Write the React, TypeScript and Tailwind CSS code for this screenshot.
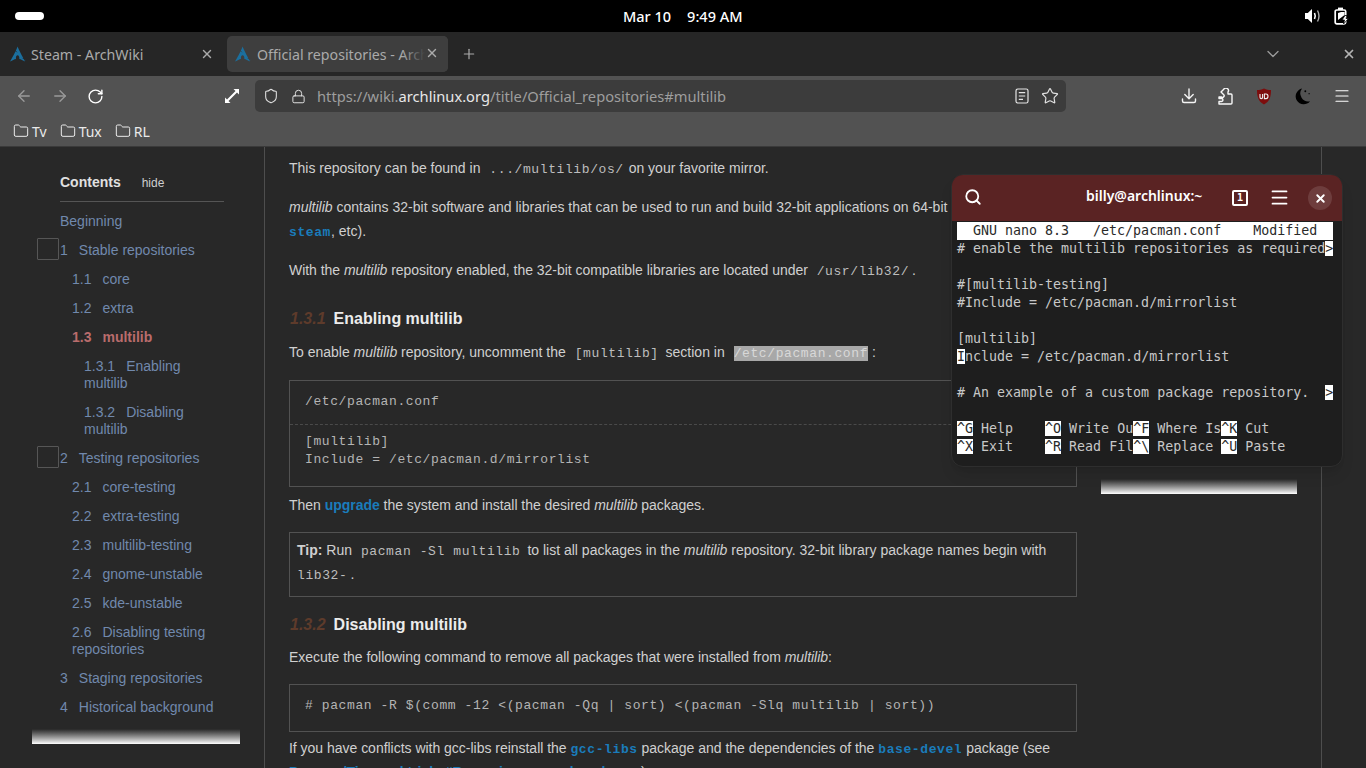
import React from "react";
import { ArrowLeft, ArrowRight, RotateCw, Lock, Star, Plus, ChevronDown, X, Menu, Folder, Search, Shield } from "lucide-react";
import { SiArchlinux } from "react-icons/si";

const sans = "font-['Liberation_Sans',sans-serif]";
const ui = "font-['Noto_Sans',sans-serif]";
const mono = "font-['Liberation_Mono',monospace] text-[13px] tracking-[0.6px]";

function Code({ children, cls = "" }: { children: React.ReactNode; cls?: string }) {
  return <code className={`${mono} leading-none text-[#bdbdbd] ml-[5px] mr-[3px] ${cls}`}>{children}</code>;
}
function LinkCode({ children }: { children: React.ReactNode }) {
  return <code className={`${mono} leading-none font-bold text-[#1a7cbb]`}>{children}</code>;
}

type Toc = { n: string; t: string; lvl: number; active?: boolean; box?: boolean };
const toc: Toc[] = [
  { n: "", t: "Beginning", lvl: 0 },
  { n: "1", t: "Stable repositories", lvl: 0, box: true },
  { n: "1.1", t: "core", lvl: 1 },
  { n: "1.2", t: "extra", lvl: 1 },
  { n: "1.3", t: "multilib", lvl: 1, active: true },
  { n: "1.3.1", t: "Enabling multilib", lvl: 2 },
  { n: "1.3.2", t: "Disabling multilib", lvl: 2 },
  { n: "2", t: "Testing repositories", lvl: 0, box: true },
  { n: "2.1", t: "core-testing", lvl: 1 },
  { n: "2.2", t: "extra-testing", lvl: 1 },
  { n: "2.3", t: "multilib-testing", lvl: 1 },
  { n: "2.4", t: "gnome-unstable", lvl: 1 },
  { n: "2.5", t: "kde-unstable", lvl: 1 },
  { n: "2.6", t: "Disabling testing repositories", lvl: 1 },
  { n: "3", t: "Staging repositories", lvl: 0 },
  { n: "4", t: "Historical background", lvl: 0 },
];

function TocRow({ item }: { item: Toc }) {
  const pad = item.lvl === 0 ? "pl-0" : item.lvl === 1 ? "pl-[12px]" : "pl-[24px]";
  const color = item.active ? "text-[#b96c6c] font-bold" : "text-[#7189ad]";
  return (
    <div className={`relative py-[6px] leading-[17px] text-[14px] w-[164px] ${pad} ${color}`}>
      {item.box && <span className="absolute left-[-23px] top-[2px] w-[22px] h-[22px] border border-[#565656] rounded-[1px]" />}
      {item.n && <span className="mr-[11px]">{item.n}</span>}
      {item.t}
    </div>
  );
}

function Inv({ children }: { children: React.ReactNode }) {
  return <span className="bg-white text-[#2a2a2a]">{children}</span>;
}

function Term() {
  return (
    <div className="absolute left-[951px] top-[174px] w-[392px] h-[293px] rounded-[12px] overflow-hidden bg-[#1e1e1e] border border-[#2e2e2e] shadow-lg">
      <div className={`h-[46px] bg-[#5a2323] flex items-center relative text-white ${ui}`}>
        <Search className="absolute left-[12px] top-[13px] w-[18px] h-[18px]" strokeWidth={2.4} />
        <div className="absolute left-[134px] top-[11px] text-[14px] font-semibold leading-[20px]">billy@archlinux:~</div>
        <div className="absolute left-[280px] top-[15px] w-[16px] h-[16px] border-[2px] border-white rounded-[2px] flex items-center justify-center text-[10px] font-bold leading-none font-['DejaVu_Sans_Mono',monospace]">1</div>
        <Menu className="absolute left-[317px] top-[12px] w-[21px] h-[21px]" strokeWidth={2} />
        <div className="absolute left-[356px] top-[11px] w-[24px] h-[24px] rounded-full bg-[#6e3d3d] flex items-center justify-center">
          <X className="w-[13px] h-[13px]" strokeWidth={3.5} />
        </div>
      </div>
      <pre className="pl-[5px] pt-[1px] font-['DejaVu_Sans_Mono',monospace] text-[13.3px] leading-[18px] text-[#c8c8c8]">
        <div className="h-[18px] w-[376px] bg-white text-[#2a2a2a]">{"  GNU nano 8.3   /etc/pacman.conf    Modified"}</div>
        <div className="h-[18px]">{"# enable the multilib repositories as required"}<Inv>{">"}</Inv></div>
        <div className="h-[18px]" />
        <div className="h-[18px]">{"#[multilib-testing]"}</div>
        <div className="h-[18px]">{"#Include = /etc/pacman.d/mirrorlist"}</div>
        <div className="h-[18px]" />
        <div className="h-[18px]">{"[multilib]"}</div>
        <div className="h-[18px]"><Inv>I</Inv>{"nclude = /etc/pacman.d/mirrorlist"}</div>
        <div className="h-[18px]" />
        <div className="h-[18px]">{"# An example of a custom package repository.  "}<Inv>{">"}</Inv></div>
        <div className="h-[18px]" />
        <div className="h-[18px]"><Inv>^G</Inv>{" Help    "}<Inv>^O</Inv>{" Write Ou"}<Inv>^F</Inv>{" Where Is"}<Inv>^K</Inv>{" Cut"}</div>
        <div className="h-[18px]"><Inv>^X</Inv>{" Exit    "}<Inv>^R</Inv>{" Read Fil"}<Inv>^\</Inv>{" Replace "}<Inv>^U</Inv>{" Paste"}</div>
      </pre>
    </div>
  );
}

function UBlock() {
  return (
    <svg width="16" height="17" viewBox="0 0 16 17">
      <path d="M8 0.5 C10.5 1.6 12.5 2 15 2 C15 9 13.5 13.5 8 16.5 C2.5 13.5 1 9 1 2 C3.5 2 5.5 1.6 8 0.5 Z" fill="#7d0d0d" />
      <path d="M4 6 V9.3 Q4 10.6 5.3 10.6 Q6.6 10.6 6.6 9.3 V6" stroke="#eee" strokeWidth="1.1" fill="none" />
      <path d="M8.4 6 H10 Q12 6 12 8.3 Q12 10.6 10 10.6 H8.4 Z" stroke="#eee" strokeWidth="1.1" fill="none" />
    </svg>
  );
}

function Moon() {
  return (
    <svg width="17" height="17" viewBox="0 0 18 18">
      <path d="M8.5 0.5 A8.5 8.5 0 1 0 17 14 A8.5 8.5 0 0 1 8.5 0.5 Z" fill="#000" />
      <circle cx="12" cy="3.5" r="1" fill="#000" />
      <circle cx="16" cy="6" r="0.7" fill="#000" />
    </svg>
  );
}

function Battery() {
  return (
    <svg width="16" height="18" viewBox="0 0 16 18" fill="none">
      <rect x="1.2" y="3" width="10.5" height="13.8" rx="1.6" stroke="#fff" strokeWidth="1.7" />
      <rect x="4" y="0.6" width="5" height="2.4" fill="#fff" />
      <path d="M7 5 H10.6 V8 L4 13 V6 Z" fill="#fff" />
      <path d="M11 8.5 L8 13 H10.5 L9.5 17 L14.5 11.5 H12 L13 8.5 Z" fill="#fff" stroke="#000" strokeWidth="0.8" />
    </svg>
  );
}

function Speaker() {
  return (
    <svg width="17" height="16" viewBox="0 0 17 16" fill="none">
      <path d="M8 1 V15 L3.8 11 H1 V5 H3.8 Z" fill="#fff" />
      <path d="M10.5 5 Q12 8 10.5 11" stroke="#fff" strokeWidth="1.6" />
      <path d="M13.5 2.5 Q16.5 8 13.5 13.5" stroke="#aaa" strokeWidth="1.4" />
    </svg>
  );
}

function Reader() {
  return (
    <svg width="14" height="16" viewBox="0 0 14 16" fill="none" stroke="#e4e4e4" strokeWidth="1.2">
      <rect x="1" y="1" width="12" height="14" rx="1.8" />
      <path d="M3.8 4.6 H10.2 M3.8 8 H10.2 M3.8 11.4 H8" />
    </svg>
  );
}

function Dl() {
  return (
    <svg width="16" height="16" viewBox="0 0 16 16" fill="none" stroke="#f4f4f4" strokeWidth="1.4" strokeLinecap="round" strokeLinejoin="round">
      <path d="M8 1 V10.5 M3.8 6.5 L8 10.8 L12.2 6.5" />
      <path d="M1.5 11 V13 Q1.5 14.5 3 14.5 H13 Q14.5 14.5 14.5 13 V11" />
    </svg>
  );
}

function Ext() {
  return (
    <svg width="15" height="17" viewBox="0 0 15 17" fill="none" stroke="#f8f8f8" strokeWidth="1.4" strokeLinejoin="round">
      <path d="M1 16 H13 Q14 16 14 15 V7 Q14 6 13 6 H10 V4 A2.5 2.5 0 0 0 5.8 1.2 L3 4 L5.5 6.5 A1.5 1.5 0 0 1 3.5 9 H1 V10.5 H3.5 A1.6 1.6 0 0 1 5 12 A1.6 1.6 0 0 1 3.5 13.5 H1 Z" />
    </svg>
  );
}

export default function App() {
  return (
    <div className={`relative w-[1366px] h-[768px] overflow-hidden bg-[#282828] flex flex-col ${sans}`}>
      {/* GNOME bar */}
      <div className={`h-[32px] shrink-0 bg-black text-white flex items-center justify-between px-[15px] relative ${ui}`}>
        <div className="w-[29px] h-[8px] rounded-full bg-white" />
        <div className="absolute left-[623px] top-[6px] text-[14.5px] font-medium leading-[20px] flex gap-[16px]">
          <span>Mar 10</span><span>9:49 AM</span>
        </div>
        <div className="flex items-center gap-[13px] pr-[1px]">
          <Speaker />
          <Battery />
        </div>
      </div>

      {/* Tabs */}
      <div className={`h-[44px] shrink-0 bg-[#262626] flex items-center text-[#aaaaaa] ${ui}`}>
        <div className="w-[227px] h-[36px] flex items-center pl-[10px] relative">
          <SiArchlinux className="w-[16px] h-[16px] text-[#1b6f9e]" />
          <span className="ml-[5px] text-[14.2px] leading-[22px] translate-y-[1px]">Steam - ArchWiki</span>
          <X className="absolute left-[200px] top-[11px] w-[14px] h-[14px]" strokeWidth={2.4} />
        </div>
        <div className="w-[221px] h-[36px] rounded-[5px] bg-[#3e3e3e] flex items-center pl-[8px] relative overflow-hidden">
          <SiArchlinux className="w-[16px] h-[16px] shrink-0 text-[#1b6f9e]" />
          <span className="ml-[6px] text-[14.2px] leading-[22px] translate-y-[1px] whitespace-nowrap">Official repositories - ArchWiki</span>
          <div className="absolute right-0 top-0 h-full w-[46px] bg-gradient-to-r from-transparent via-[#3e3e3e] to-[#3e3e3e]" />
          <X className="absolute left-[198px] top-[10px] w-[14px] h-[14px]" strokeWidth={2.4} />
        </div>
        <Plus className="ml-[13px] w-[16px] h-[16px]" strokeWidth={1.8} />
        <div className="flex-1" />
        <ChevronDown className="w-[20px] h-[20px] text-[#9a9a9a] mr-[59px]" strokeWidth={1.6} />
        <X className="w-[14px] h-[14px] mr-[10px] text-[#b4b4b4]" strokeWidth={3} />
      </div>

      {/* Toolbar */}
      <div className={`h-[40px] shrink-0 bg-[#525252] relative flex items-center text-white ${ui}`}>
        <ArrowLeft className="ml-[15px] w-[18px] h-[18px] text-[#9a9a9a]" strokeWidth={1.8} />
        <ArrowRight className="ml-[18px] w-[18px] h-[18px] text-[#9a9a9a]" strokeWidth={1.8} />
        <RotateCw className="ml-[18px] w-[17px] h-[17px]" strokeWidth={2} />
        <svg className="ml-[120px]" width="16" height="16" viewBox="0 0 16 16" fill="#fff">
          <path d="M9.5 1 H15 V6.5 L13 4.5 L4.5 13 L6.5 15 H1 V9.5 L3 11.5 L11.5 3 Z" />
        </svg>
        <div className="ml-[15px] w-[811px] h-[32px] rounded-[5px] bg-[#3c3c3c] flex items-center relative">
          <Shield className="ml-[8px] w-[16px] h-[16px] text-[#e0e0e0]" strokeWidth={1.6} />
          <Lock className="ml-[12px] w-[15px] h-[17px] text-[#e0e0e0]" strokeWidth={1.6} />
          <span className="ml-[11px] text-[14.7px] text-[#9e9e9e] leading-none">https://wiki.<span className="text-[#e8e8e8]">archlinux.org</span>/title/Official_repositories#multilib</span>
          <span className="absolute left-[760px] top-[8px] flex"><Reader /></span>
          <Star className="absolute left-[786px] top-[7px] w-[18px] h-[18px] text-[#e0e0e0]" strokeWidth={1.6} />
        </div>
        <span className="ml-[115px] flex"><Dl /></span>
        <span className="ml-[21px] flex"><Ext /></span>
        <span className="ml-[23px] flex"><UBlock /></span>
        <span className="ml-[22px] flex"><Moon /></span>
        <Menu className="ml-[22px] w-[18px] h-[18px]" strokeWidth={1.6} />
      </div>

      {/* Bookmarks */}
      <div className={`h-[31px] shrink-0 bg-[#525252] border-b border-[#3a3a3a] flex items-center pl-[13px] text-[14px] text-[#eaeaea] ${ui}`}>
        <Folder className="w-[16px] h-[16px]" strokeWidth={1.5} />
        <span className="ml-[3px]">Tv</span>
        <Folder className="ml-[13px] w-[16px] h-[16px]" strokeWidth={1.5} />
        <span className="ml-[3px]">Tux</span>
        <Folder className="ml-[13px] w-[16px] h-[16px]" strokeWidth={1.5} />
        <span className="ml-[3px]">RL</span>
      </div>

      {/* Page */}
      <div className="flex-1 flex min-h-0 overflow-hidden">
        <aside className="w-[265px] shrink-0 border-r border-[#4e4e4e] pl-[32px]">
          <div className="w-[208px] pl-[28px]">
            <div className="pt-[26px] pb-[10px] w-[164px] border-b border-[#555] flex items-baseline h-[55px]">
              <span className="text-[14px] font-bold text-[#e0e0e0] leading-[18px]">Contents</span>
              <span className="text-[12px] text-[#cfcfcf] ml-[21px] leading-[18px]">hide</span>
            </div>
            <div className="mt-[5px]">
              {toc.map((i, k) => <TocRow key={k} item={i} />)}
            </div>
          </div>
          <div className="mt-[7px] w-[208px] h-[15px] bg-gradient-to-b from-[#282828] to-white" />
        </aside>

        <main className="w-[1057px] shrink-0 border-r border-[#4e4e4e] flex">
          <div className="w-[812px] shrink-0 pl-[24px] pt-[9px] text-[14px] leading-[24px] text-[#d0d0d0]">
            <div className="w-[788px]">
              <p>This repository can be found in <Code cls="!mr-[1px]">.../multilib/os/</Code> on your favorite mirror.</p>
              <p className="mt-[15px]"><span className="block whitespace-nowrap"><i>multilib</i> contains 32-bit software and libraries that can be used to run and build 32-bit applications on 64-bit installations (e.g. wine,</span><LinkCode>steam</LinkCode>, etc).</p>
              <p className="mt-[15px] whitespace-nowrap tracking-[-0.03px]">With the <i>multilib</i> repository enabled, the 32-bit compatible libraries are located under <Code>/usr/lib32/</Code>.</p>

              <h3 className="mt-[25px] text-[16px] font-bold text-[#ececec] leading-[24px]"><i className="text-[#5e3b2b] ml-[1px] mr-[8px]">1.3.1</i>Enabling multilib</h3>
              <p className="mt-[9px]">To enable <i>multilib</i> repository, uncomment the <Code>[multilib]</Code> section in <Code cls="bg-[#a8a8a8] text-[#d8d8d8] !mr-[0px]">/etc/pacman.conf</Code> :</p>

              <div className={`mt-[16px] border border-[#525252] h-[107px] ${mono} leading-[18px] text-[#b4b4b4]`}>
                <div className="h-[44px] pl-[15px] pt-[12px] border-b border-dashed border-[#4a4a4a]">/etc/pacman.conf</div>
                <div className="pl-[15px] pt-[8px]"><div>[multilib]</div><div>Include = /etc/pacman.d/mirrorlist</div></div>
              </div>

              <p className="mt-[6px] tracking-[-0.03px]">Then <b className="text-[#1a7cbb]">upgrade</b> the system and install the desired <i>multilib</i> packages.</p>

              <div className="mt-[15px] border border-[#525252] h-[65px] pl-[7px] pr-[7px] pt-[5px]">
                <b>Tip:</b> Run <Code>pacman -Sl multilib</Code> to list all packages in the <i>multilib</i> repository. 32-bit library package names begin with <Code cls="!ml-0">lib32-</Code>.
              </div>

              <h3 className="mt-[16px] text-[16px] font-bold text-[#ececec] leading-[24px]"><i className="text-[#5e3b2b] ml-[1px] mr-[8px]">1.3.2</i>Disabling multilib</h3>
              <p className="mt-[8px] tracking-[-0.03px]">Execute the following command to remove all packages that were installed from <i>multilib</i>:</p>

              <div className={`mt-[15px] border border-[#525252] h-[48px] pl-[15px] pt-[12px] ${mono} leading-[18px] text-[#b4b4b4] whitespace-nowrap`}>
                {"# pacman -R $(comm -12 <(pacman -Qq | sort) <(pacman -Slq multilib | sort))"}
              </div>

              <p className="mt-[4px] tracking-[-0.02px]">If you have conflicts with gcc-libs reinstall the <LinkCode>gcc-libs</LinkCode> package and the dependencies of the <LinkCode>base-devel</LinkCode> package (see <b className="text-[#1a7cbb]">Pacman/Tips and tricks#Removing unused packages</b>).</p>
            </div>
          </div>
          <div className="pl-[24px] pt-[332px]">
            <div className="w-[196px] h-[15px] bg-gradient-to-b from-[#282828] to-white" />
          </div>
        </main>
      </div>

      <Term />
    </div>
  );
}
